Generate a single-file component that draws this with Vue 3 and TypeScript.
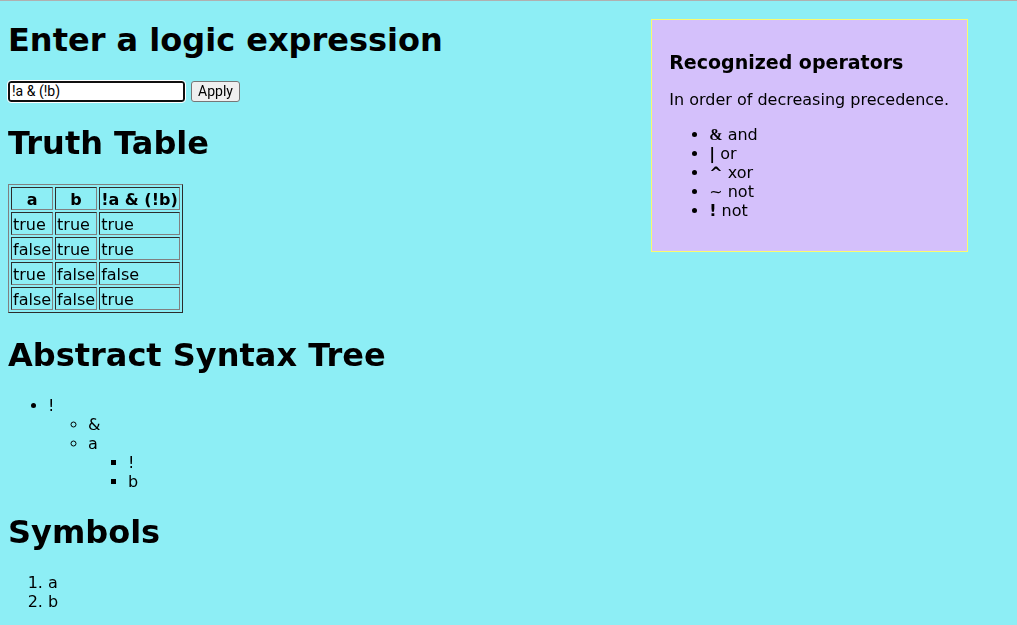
<script setup lang="ts">
import { ref, onMounted } from 'vue'

const expression = ref('!a & (!b)')
const field = ref<HTMLInputElement | null>(null)
const columns = ['a', 'b', '!a & (!b)']
const rows = [
  [true, true, true],
  [false, true, true],
  [true, false, false],
  [false, false, true],
]
const operators = [
  { symbol: '&', name: 'and', style: 'serif' },
  { symbol: '|', name: 'or', style: '' },
  { symbol: '^', name: 'xor', style: '' },
  { symbol: '~', name: 'not', style: 'light' },
  { symbol: '!', name: 'not', style: '' },
]
const symbols = ['a', 'b']

onMounted(() => field.value?.focus())
</script>

<template>
  <div class="page">
    <aside class="help">
      <h3>Recognized operators</h3>
      <p>In order of decreasing precedence.</p>
      <ul>
        <li v-for="op in operators" :key="op.symbol"><b :class="op.style">{{ op.symbol }}</b> {{ op.name }}</li>
      </ul>
    </aside>
    <main>
      <h1>Enter a logic expression</h1>
      <form class="entry" @submit.prevent>
        <input ref="field" v-model="expression" type="text" aria-label="Logic expression" spellcheck="false" />
        <button type="submit">Apply</button>
      </form>
      <h1>Truth Table</h1>
      <table>
        <thead>
          <tr><th v-for="c in columns" :key="c">{{ c }}</th></tr>
        </thead>
        <tbody>
          <tr v-for="(row, i) in rows" :key="i">
            <td v-for="(cell, j) in row" :key="j">{{ cell }}</td>
          </tr>
        </tbody>
      </table>
      <h1>Abstract Syntax Tree</h1>
      <ul>
        <li>!
          <ul>
            <li>&amp;</li>
            <li>a
              <ul>
                <li>!</li>
                <li>b</li>
              </ul>
            </li>
          </ul>
        </li>
      </ul>
      <h1>Symbols</h1>
      <ol>
        <li v-for="s in symbols" :key="s">{{ s }}</li>
      </ol>
    </main>
  </div>
</template>

<style>
html {
  background: #8deef5;
}
</style>

<style scoped>
.page {
  box-sizing: border-box;
  min-height: 100vh;
  padding: 0 8px;
  border-top: 1px solid #b0b0b0;
  display: flex;
  flex-direction: row-reverse;
  justify-content: space-between;
  align-items: flex-start;
  overflow: hidden;
  color: #000;
  font: 16px/19px Verdana, "DejaVu Sans", sans-serif;
}
h1 {
  margin: 22px 0 21px;
  font-size: 32px;
  line-height: 39px;
}
h1:first-child {
  margin-top: 20px;
}
.help {
  margin: 18px 41px 0 0;
  padding: 16px 18px 16px 17px;
  border: 1px solid #fafa6e;
  background: #d4c0fb;
}
.help h3 {
  margin: 15px 0 16px;
  font-size: 19px;
  line-height: 23px;
}
.help p {
  margin: 16px 0;
}
ul,
ol {
  margin: 16px 0;
  padding-left: 40px;
}
.help ul {
  margin-bottom: 15px;
}
li ul {
  margin: 0;
}
.serif {
  font-family: "Liberation Serif", serif;
  line-height: 1;
}
.light {
  font-weight: normal;
}
.entry {
  display: flex;
  align-items: center;
  gap: 6px;
}
input {
  box-sizing: border-box;
  width: 177px;
  height: 21px;
  padding: 0 2px 2px;
  border: 2px solid #101010;
  border-radius: 3px;
  outline: 1px solid #fff;
  background: #fff;
  color: #000;
  font: 14px Roboto, Arial, sans-serif;
}
button {
  box-sizing: border-box;
  width: 49px;
  height: 21px;
  padding: 0 0 2px;
  border: 1px solid #767676;
  border-radius: 3px;
  background: #efefef;
  color: #000;
  font: 14px Roboto, Arial, sans-serif;
}
table {
  margin-bottom: 23px;
  border: 1px outset #808080;
  border-collapse: separate;
  border-spacing: 2px;
}
th,
td {
  padding: 2px 1px 0;
  border: 1px inset #808080;
  line-height: 19px;
}
</style>
